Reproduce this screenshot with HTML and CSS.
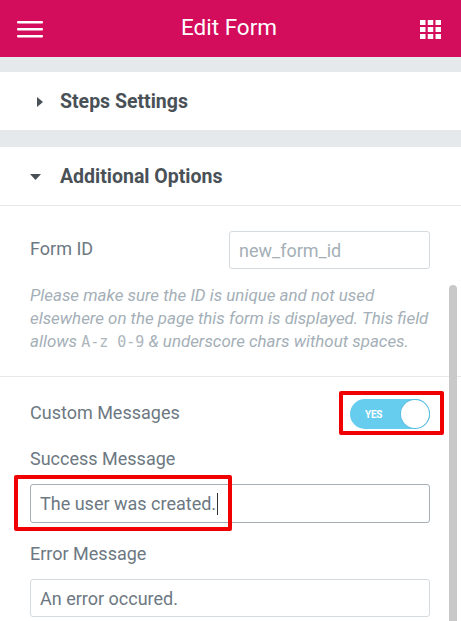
FILE: index.html
```html
<!DOCTYPE html>
<html lang="en">
<head>
<meta charset="utf-8">
<title>Edit Form</title>
<link rel="stylesheet" href="styles.css">
</head>
<body>
<div class="panel">
  <header class="topbar">
    <svg class="icon-menu" width="26" height="17" viewBox="0 0 26 17">
      <rect x="0" y="0" width="26" height="2.6" rx="1" fill="#fff"/>
      <rect x="0" y="7" width="26" height="2.6" rx="1" fill="#fff"/>
      <rect x="0" y="14" width="26" height="2.6" rx="1" fill="#fff"/>
    </svg>
    <h1 class="title">Edit Form</h1>
    <svg class="icon-grid" width="21" height="19" viewBox="0 0 21 19">
      <rect x="0" y="0" width="5.5" height="5" fill="#fff"/>
      <rect x="7.75" y="0" width="5.5" height="5" fill="#fff"/>
      <rect x="15.5" y="0" width="5.5" height="5" fill="#fff"/>
      <rect x="0" y="7" width="5.5" height="5" fill="#fff"/>
      <rect x="7.75" y="7" width="5.5" height="5" fill="#fff"/>
      <rect x="15.5" y="7" width="5.5" height="5" fill="#fff"/>
      <rect x="0" y="14" width="5.5" height="5" fill="#fff"/>
      <rect x="7.75" y="14" width="5.5" height="5" fill="#fff"/>
      <rect x="15.5" y="14" width="5.5" height="5" fill="#fff"/>
    </svg>
  </header>

  <main class="content">
    <section class="sec">
      <div class="sec-head closed">
        <svg class="caret" width="6" height="10" viewBox="0 0 6 10"><path d="M0 0 L6 5 L0 10 Z" fill="#495157"/></svg>
        <span>Steps Settings</span>
      </div>
    </section>

    <section class="sec">
      <div class="sec-head open">
        <svg class="caret" width="11" height="6" viewBox="0 0 11 6"><path d="M0 0 L11 0 L5.5 6 Z" fill="#495157"/></svg>
        <span>Additional Options</span>
      </div>
      <div class="sec-body">
        <div class="group first">
          <div class="row">
            <label class="label">Form ID</label>
            <div class="input short placeholder">new_form_id</div>
          </div>
          <p class="desc">Please make sure the ID is unique and not used elsewhere on the page this form is displayed. This field allows <code>A-z 0-9</code> &amp; underscore chars without spaces.</p>
        </div>
        <div class="group second">
          <div class="row">
            <label class="label">Custom Messages</label>
            <div class="toggle-wrap highlight-toggle">
              <div class="toggle"><span class="yes">YES</span><span class="knob"></span></div>
            </div>
          </div>
          <div class="field success">
            <label class="label">Success Message</label>
            <div class="input-wrap">
              <div class="input focused">The user was created.<span class="cursor"></span></div>
              <div class="highlight-input"></div>
            </div>
          </div>
          <div class="field error">
            <label class="label">Error Message</label>
            <div class="input">An error occured.</div>
          </div>
        </div>
      </div>
    </section>
  </main>

  <div class="scrollbar"></div>
</div>
</body>
</html>
```

FILE: styles.css
```css
* { box-sizing: border-box; }

html, body {
  margin: 0;
  padding: 0;
  background: #ffffff;
}

body {
  font-family: Roboto, "Liberation Sans", Arial, sans-serif;
  width: 461px;
  height: 621px;
  overflow: hidden;
}

.panel {
  position: relative;
  width: 461px;
  height: 621px;
  overflow: hidden;
  background: #ffffff;
}

.topbar {
  height: 57px;
  background: #d30c5c;
  display: grid;
  grid-template-columns: 1fr auto 1fr;
  align-items: center;
  padding: 0 20px 0 17px;
}

.icon-menu { display: block; margin-top: 1px; justify-self: start; }
.icon-grid { display: block; margin-top: 1px; justify-self: end; }

.title {
  margin: 0;
  color: #ffffff;
  font-weight: 400;
  font-size: 22.5px;
  line-height: 30px;
  margin-top: -4px;
}

.content {
  background: #e6e9ec;
  padding-top: 15px;
  display: flex;
  flex-direction: column;
  gap: 17px;
}

.sec {
  background: #ffffff;
}

.sec-head {
  height: 58px;
  display: flex;
  align-items: center;
  color: #495157;
  font-weight: 700;
  font-size: 19.5px;
}

.sec-head.closed { padding-left: 37px; gap: 17px; }
.sec-head.closed .caret { margin-top: 1px; }
.sec-head.open { padding-left: 30px; gap: 19px; }
.sec-head.open .caret { margin-top: 2px; }
.caret { display: block; flex: none; }

.sec-body {
  border-top: 1px solid #e6e9ec;
  padding-bottom: 40px;
}

.group {
  padding: 0 31px 0 30px;
}

.group.first {
  padding-top: 25px;
  padding-bottom: 23px;
}

.group.second {
  border-top: 1px solid #e6e9ec;
  padding-top: 22px;
}

.row {
  display: flex;
  align-items: center;
  justify-content: space-between;
}

.label {
  color: #6d7882;
  font-size: 18px;
  line-height: 22px;
  display: block;
}

.row .label { margin-top: -3px; }

.input {
  height: 38px;
  border: 1px solid #d5dadf;
  border-radius: 3px;
  padding: 0 9px;
  display: flex;
  align-items: center;
  color: #6d7882;
  font-size: 18px;
  background: #fff;
}

.input.short { width: 201px; }
.input.placeholder { color: #a4afb7; }
.input.focused { border-color: #a4afb7; height: 39px; }

.cursor {
  display: inline-block;
  width: 1px;
  height: 22px;
  background: #333;
  margin-left: 1px;
}

.desc {
  margin: 15px -12px 0 0;
  color: #a4afb7;
  font-style: italic;
  font-size: 16.9px;
  line-height: 23px;
}

.desc code {
  font-family: "DejaVu Sans Mono", "Liberation Mono", monospace;
  font-style: normal;
  font-size: 15px;
  line-height: 1;
  color: #adb6bd;
}

.toggle-wrap {
  position: relative;
}

.toggle {
  width: 80px;
  height: 30px;
  border-radius: 15px;
  background: #67cdef;
  position: relative;
  display: flex;
  align-items: center;
}

.yes {
  color: #fff;
  font-weight: 700;
  font-size: 10px;
  margin-left: 15px;
  letter-spacing: -0.3px;
}

.knob {
  position: absolute;
  right: 1px;
  top: 1px;
  width: 28px;
  height: 28px;
  border-radius: 50%;
  background: #fff;
  box-shadow: 0 0 0 1px #5bbde0;
}

.highlight-toggle::after {
  content: "";
  position: absolute;
  left: -11px;
  right: -14px;
  top: -8px;
  bottom: -6px;
  border: 4px solid #f00000;
  border-radius: 2px;
}

.field.success { margin-top: 19px; }
.field.error { margin-top: 20px; }
.field .label { margin-bottom: 14px; }

.input-wrap { position: relative; }

.highlight-input {
  position: absolute;
  left: -16px;
  top: -9px;
  width: 218px;
  height: 56px;
  border: 4px solid #f00000;
  border-radius: 2px;
}

.scrollbar {
  position: absolute;
  left: 449px;
  top: 285px;
  width: 8px;
  bottom: 0;
  background: #c9c9c9;
  border-radius: 4px 4px 0 0;
}
```
